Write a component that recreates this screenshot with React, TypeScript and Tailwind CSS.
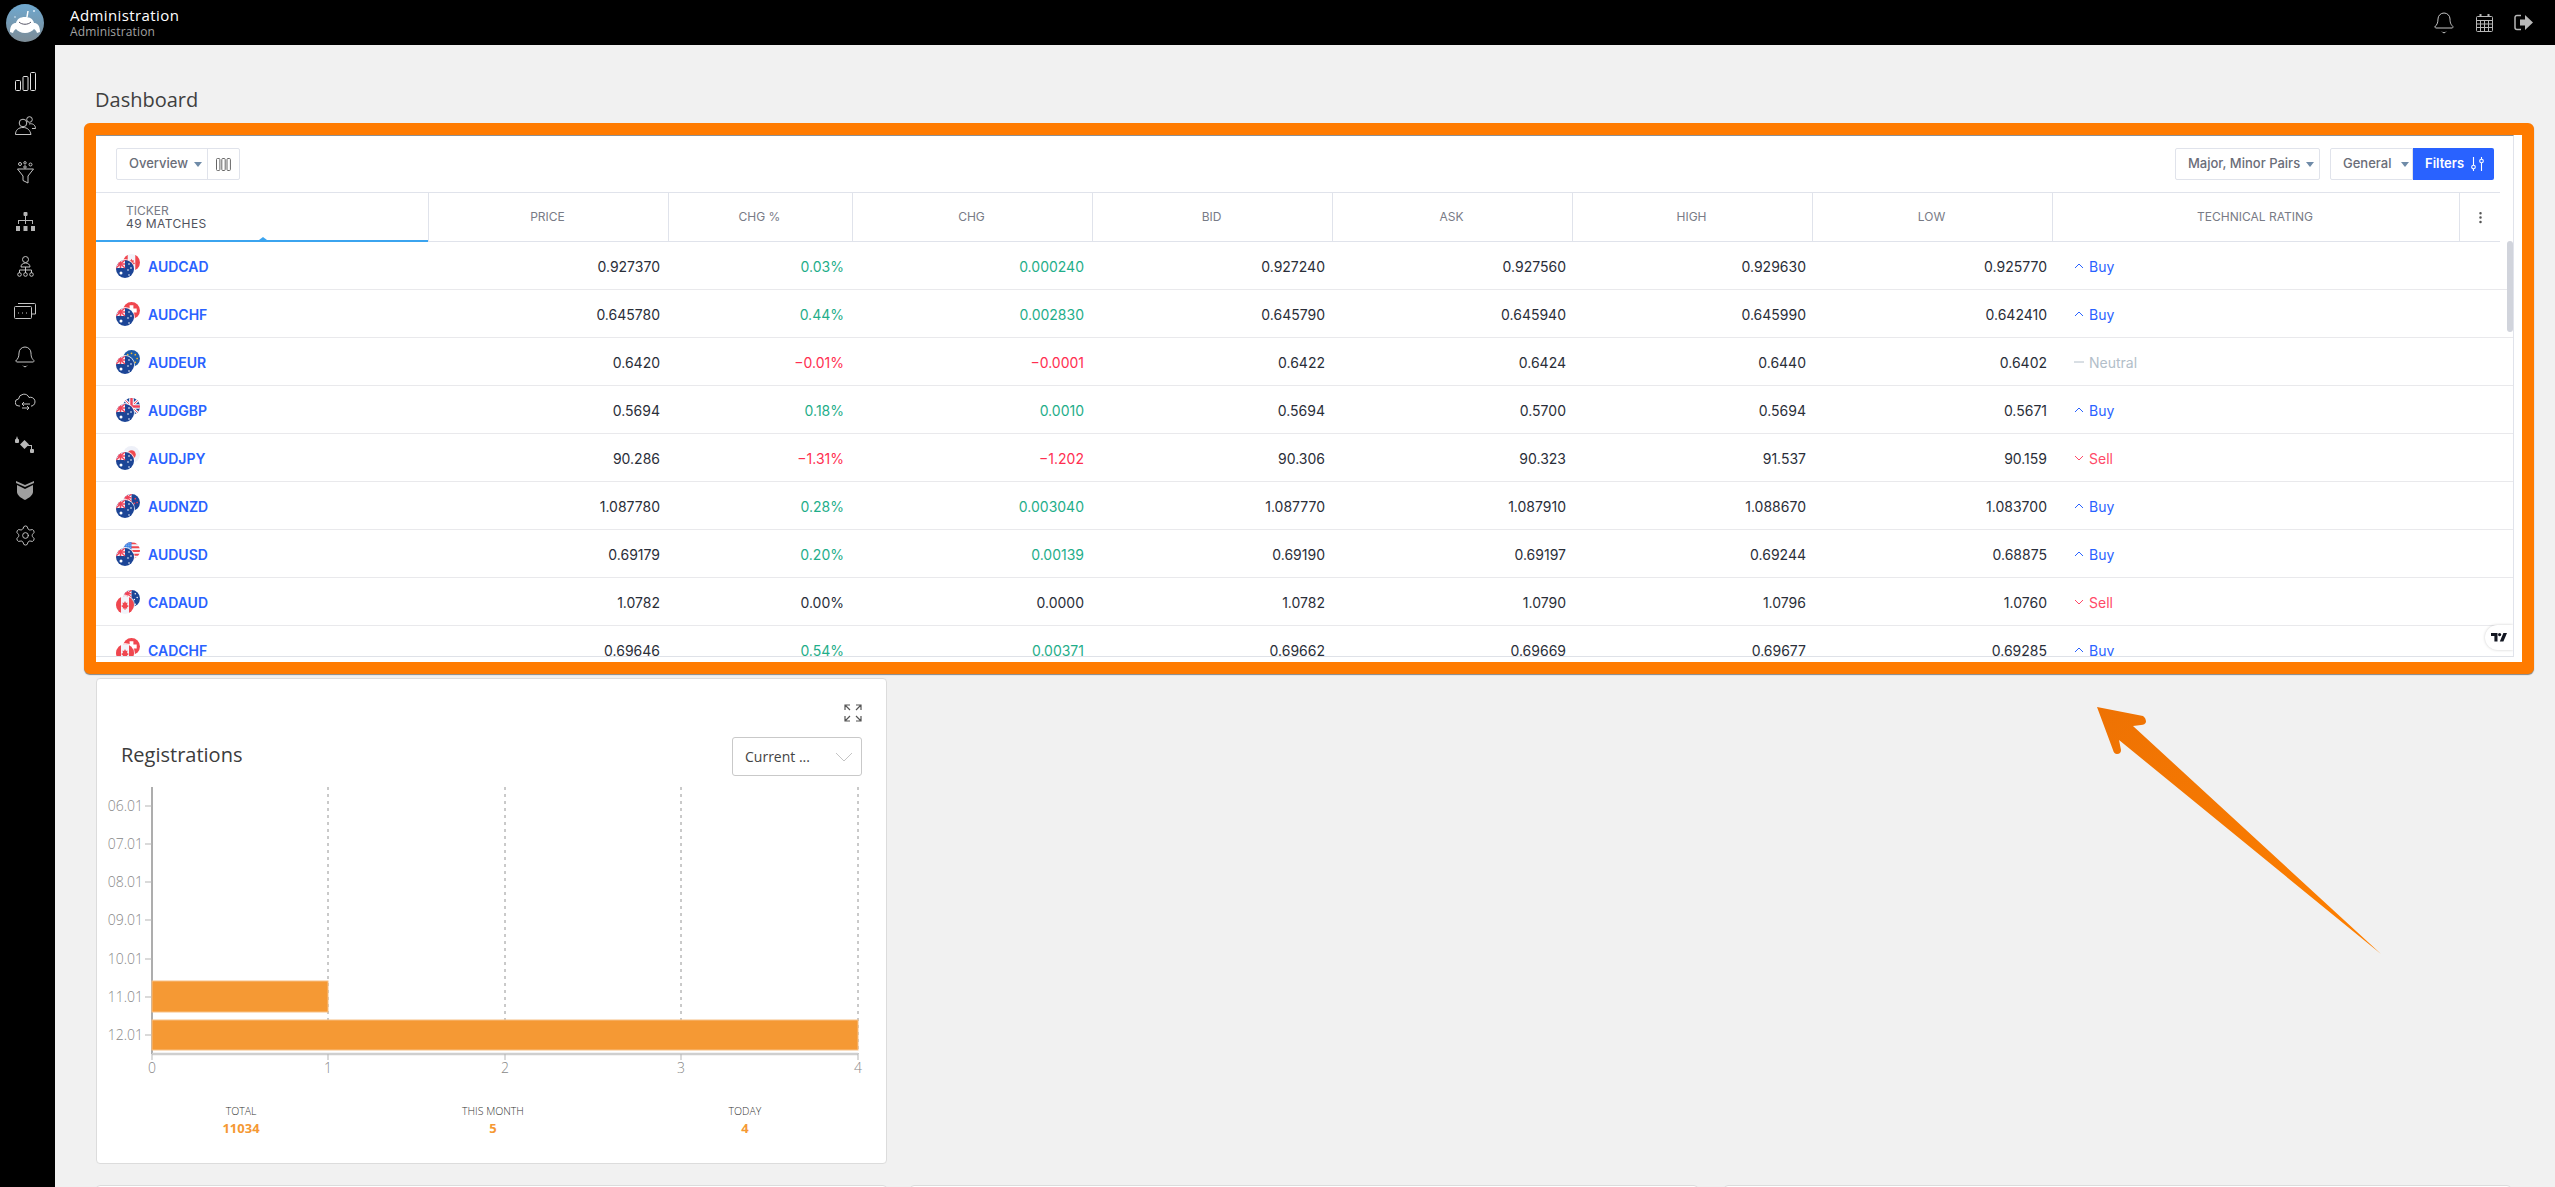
import type { ReactNode } from 'react';
import { Bell, Settings, EllipsisVertical } from 'lucide-react';

const GRID = 'grid grid-cols-[333px_240px_184px_240px_240px_240px_240px_240px_407px_1fr]';

const flags: Record<string, ReactNode> = {
  AU: (
    <>
      <rect width="18" height="18" fill="#1c4596" />
      <rect width="9" height="8" fill="#f3f4fa" />
      <path d="M0 0l9 8M9 0L0 8" stroke="#f0445a" strokeWidth="1.4" />
      <path d="M4.5 0v8M0 4h9" stroke="#f0445a" strokeWidth="1.6" />
      <circle cx="5" cy="13" r="1.5" fill="#fff" />
      <circle cx="13" cy="4" r=".8" fill="#fff" />
      <circle cx="15" cy="8" r=".8" fill="#fff" />
      <circle cx="12" cy="10" r=".8" fill="#fff" />
      <circle cx="13" cy="15" r=".8" fill="#fff" />
    </>
  ),
  CA: (
    <>
      <rect width="18" height="18" fill="#f3f4fa" />
      <rect width="5" height="18" fill="#f0474f" />
      <rect x="13" width="5" height="18" fill="#f0474f" />
      <path d="M9 5l1 2 1.5-.5-.5 3 1-.5.6 1.2-1.6 1.3.2 1H9.4V14h-.8v-1.5H6.8l.2-1-1.6-1.3.6-1.2 1 .5-.5-3 1.5.5z" fill="#f0474f" />
    </>
  ),
  CH: (
    <>
      <rect width="18" height="18" fill="#f0474f" />
      <path d="M7 3.5h4v3.5h3.5v4H11v3.5H7V11H3.5V7H7z" fill="#fff" />
    </>
  ),
  EU: (
    <>
      <rect width="18" height="18" fill="#1f5ca8" />
      <circle cx="9" cy="3.5" r=".9" fill="#f5b82e" />
      <circle cx="5" cy="5" r=".9" fill="#f5b82e" />
      <circle cx="13" cy="5" r=".9" fill="#f5b82e" />
      <circle cx="15" cy="9" r=".9" fill="#f5b82e" />
      <circle cx="3" cy="9" r=".9" fill="#f5b82e" />
      <circle cx="13" cy="13" r=".9" fill="#f5b82e" />
    </>
  ),
  GB: (
    <>
      <rect width="18" height="18" fill="#1c4596" />
      <path d="M0 0l18 18M18 0L0 18" stroke="#f3f4fa" strokeWidth="3" />
      <path d="M0 0l18 18M18 0L0 18" stroke="#f0445a" strokeWidth="1" />
      <path d="M9 0v18M0 9h18" stroke="#f3f4fa" strokeWidth="5" />
      <path d="M9 0v18M0 9h18" stroke="#f0445a" strokeWidth="2.6" />
    </>
  ),
  JP: (
    <>
      <rect width="18" height="18" fill="#eef0f8" />
      <circle cx="9" cy="9" r="4.5" fill="#f0474f" />
    </>
  ),
  NZ: (
    <>
      <rect width="18" height="18" fill="#1c4596" />
      <rect width="9" height="8" fill="#f3f4fa" />
      <path d="M0 0l9 8M9 0L0 8" stroke="#f0445a" strokeWidth="1.4" />
      <path d="M4.5 0v8M0 4h9" stroke="#f0445a" strokeWidth="1.6" />
      <circle cx="13" cy="5" r=".9" fill="#f0445a" />
      <circle cx="15" cy="9" r=".9" fill="#f0445a" />
      <circle cx="12" cy="10" r=".9" fill="#f0445a" />
    </>
  ),
  US: (
    <>
      <rect width="18" height="18" fill="#f3f4fa" />
      <path d="M0 1.5h18M0 5.5h18M0 9.5h18M0 13.5h18M0 17.5h18" stroke="#f0474f" strokeWidth="2" />
      <rect width="9" height="8" fill="#3b82e6" />
      <path d="M1 2h7M1 4h7M1 6h7" stroke="#cfe0fa" strokeWidth=".8" strokeDasharray="1 1" />
    </>
  ),
};

const rows = [
  ['AU', 'CA', 'AUDCAD', '0.927370', '0.03%', '0.000240', '0.927240', '0.927560', '0.929630', '0.925770', 'Buy'],
  ['AU', 'CH', 'AUDCHF', '0.645780', '0.44%', '0.002830', '0.645790', '0.645940', '0.645990', '0.642410', 'Buy'],
  ['AU', 'EU', 'AUDEUR', '0.6420', '−0.01%', '−0.0001', '0.6422', '0.6424', '0.6440', '0.6402', 'Neutral'],
  ['AU', 'GB', 'AUDGBP', '0.5694', '0.18%', '0.0010', '0.5694', '0.5700', '0.5694', '0.5671', 'Buy'],
  ['AU', 'JP', 'AUDJPY', '90.286', '−1.31%', '−1.202', '90.306', '90.323', '91.537', '90.159', 'Sell'],
  ['AU', 'NZ', 'AUDNZD', '1.087780', '0.28%', '0.003040', '1.087770', '1.087910', '1.088670', '1.083700', 'Buy'],
  ['AU', 'US', 'AUDUSD', '0.69179', '0.20%', '0.00139', '0.69190', '0.69197', '0.69244', '0.68875', 'Buy'],
  ['CA', 'AU', 'CADAUD', '1.0782', '0.00%', '0.0000', '1.0782', '1.0790', '1.0796', '1.0760', 'Sell'],
  ['CA', 'CH', 'CADCHF', '0.69646', '0.54%', '0.00371', '0.69662', '0.69669', '0.69677', '0.69285', 'Buy'],
];

function changeColor(v: string) {
  if (v.startsWith('−')) return 'text-[#ff2e50]';
  if (/^0\.0+%?$/.test(v)) return 'text-[#2a2e39]';
  return 'text-[#1fae8a]';
}

function FlagPair({ base, quote }: { base: string; quote: string }) {
  return (
    <span className="relative block w-[25px] h-[25px] mr-[7px]">
      <span className="absolute left-[7px] top-0 w-[17px] h-[17px] rounded-full overflow-hidden">
        <svg viewBox="0 0 18 18" className="w-full h-full">{flags[quote]}</svg>
      </span>
      <span className="absolute left-0 top-[6px] w-[18px] h-[18px] rounded-full overflow-hidden ring-1 ring-white/80">
        <svg viewBox="0 0 18 18" className="w-full h-full">{flags[base]}</svg>
      </span>
    </span>
  );
}

function Rating({ value }: { value: string }) {
  if (value === 'Buy') {
    return (
      <span className="flex items-center gap-[5px] text-[#2962ff]">
        <svg width="10" height="6" viewBox="0 0 10 6" fill="none" stroke="currentColor">
          <path d="M1 5l4-4 4 4" />
        </svg>
        Buy
      </span>
    );
  }
  if (value === 'Sell') {
    return (
      <span className="flex items-center gap-[5px] text-[#ff4a68]">
        <svg width="10" height="6" viewBox="0 0 10 6" fill="none" stroke="currentColor">
          <path d="M1 1l4 4 4-4" />
        </svg>
        Sell
      </span>
    );
  }
  return (
    <span className="flex items-center gap-[5px] text-[#b2bec9]">
      <svg width="10" height="6" viewBox="0 0 10 6" fill="none" stroke="currentColor">
        <path d="M0 3h10" />
      </svg>
      {value}
    </span>
  );
}

function Caret() {
  return (
    <svg width="8" height="5" viewBox="0 0 8 5" className="text-[#6f8ba8]">
      <path d="M0 0h8L4 5z" fill="currentColor" />
    </svg>
  );
}

function MarketTable() {
  const heads = ['PRICE', 'CHG %', 'CHG', 'BID', 'ASK', 'HIGH', 'LOW', 'TECHNICAL RATING'];
  return (
    <div className="relative w-[2418px] h-[522px] overflow-hidden border-t border-[#8f8f8f] border-r-[#e0e3eb] border-r border-b-[#dfe2e8] border-b font-['Inter',sans-serif]">
      {/* toolbar */}
      <div className="flex items-center justify-between h-[56px] pt-[12px] pb-[12px] pl-[20px] pr-[19px] text-[13px] font-medium text-[#6a6d78]">
        <div className="flex h-[32px] border border-[#e0e3eb] rounded-[2px]">
          <div className="flex items-center gap-[6px] pl-[12px] w-[91px] border-r border-[#e0e3eb]">
            Overview
            <Caret />
          </div>
          <div className="flex items-center justify-center w-[31px]">
            <svg width="15" height="13" viewBox="0 0 15 13" fill="none" stroke="#666" strokeWidth="1">
              <rect x=".5" y=".5" width="3.4" height="12" rx="1" />
              <rect x="5.8" y=".5" width="3.4" height="12" rx="1" />
              <rect x="11" y=".5" width="3.4" height="12" rx="1" />
            </svg>
          </div>
        </div>
        <div className="flex gap-[10px]">
          <div className="flex items-center gap-[6px] h-[32px] w-[145px] pl-[12px] border border-[#e0e3eb] rounded-[2px]">
            Major, Minor Pairs
            <Caret />
          </div>
          <div className="flex h-[32px]">
            <div className="flex items-center gap-[10px] w-[83px] pl-[12px] border border-[#e0e3eb] rounded-l-[2px]">
              General
              <Caret />
            </div>
            <div className="flex items-center w-[81px] pl-[12px] gap-[7px] bg-[#2962ff] text-white font-semibold rounded-r-[2px]">
              Filters
              <svg width="13" height="16" viewBox="0 0 13 16" fill="none" stroke="#fff" strokeWidth="1.1">
                <path d="M2.5 1v8M2.5 13v2M10.5 1v2M10.5 7v8" />
                <circle cx="2.5" cy="11" r="1.8" />
                <circle cx="10.5" cy="5" r="1.8" />
              </svg>
            </div>
          </div>
        </div>
      </div>

      {/* header */}
      <div className={`${GRID} h-[50px] border-t border-b border-[#e0e3eb] text-[12px] text-[#787b86] mr-[13px]`}>
        <div className="relative flex flex-col justify-center pl-[30px] leading-[13px] border-r border-[#e0e3eb]">
          <span>TICKER</span>
          <span className="text-[#50535e] tracking-[0.4px]">49 MATCHES</span>
          <span className="absolute left-0 right-0 bottom-[-1px] h-[2px] bg-[#3ba4ef]" />
          <span className="absolute left-[163px] bottom-[1px] w-0 h-0 border-l-[4px] border-r-[4px] border-b-[3px] border-l-transparent border-r-transparent border-b-[#3ba4ef]" />
        </div>
        {heads.map((h) => (
          <div key={h} className="flex items-center justify-center pr-[2px] border-r border-[#e0e3eb]">
            {h}
          </div>
        ))}
        <div className="flex items-center justify-center w-[41px] text-[#555]">
          <EllipsisVertical size={15} strokeWidth={2} />
        </div>
      </div>

      {/* rows */}
      {rows.map((r) => (
        <div key={r[2]} className={`${GRID} h-[48px] pt-px border-b border-[#e9e9ec] items-center text-[14px] text-[#2a2e39]`}>
          <div className="flex items-center pl-[20px]">
            <FlagPair base={r[0]} quote={r[1]} />
            <span className="font-semibold text-[#2962ff]">{r[2]}</span>
          </div>
          <div className="text-right pr-[9px]">{r[3]}</div>
          <div className={`text-right pr-[9px] ${changeColor(r[4])}`}>{r[4]}</div>
          <div className={`text-right pr-[9px] ${changeColor(r[5])}`}>{r[5]}</div>
          <div className="text-right pr-[8px]">{r[6]}</div>
          <div className="text-right pr-[7px]">{r[7]}</div>
          <div className="text-right pr-[7px]">{r[8]}</div>
          <div className="text-right pr-[6px]">{r[9]}</div>
          <div className="pl-[21px]">
            <Rating value={r[10]} />
          </div>
        </div>
      ))}

      {/* scroll thumb */}
      <div className="absolute right-0 top-[105px] w-[6px] h-[91px] rounded-[3px] bg-[#d1d4dc]" />

      {/* tradingview badge */}
      <div className="absolute right-0 bottom-[6px] w-[28px] h-[25px] flex items-center justify-center bg-white rounded-l-full shadow-[0_0_3px_rgba(0,0,0,0.2)]">
        <svg width="16" height="9" viewBox="0 0 16 9" fill="#131722">
          <path d="M0 0h6.5v8.5H3.4V3H0z" />
          <circle cx="8.6" cy="1.6" r="1.6" />
          <path d="M12.4 0H16l-3.6 8.5H8.8z" />
        </svg>
      </div>
    </div>
  );
}

function RegistrationsChart() {
  const days = ['06.01', '07.01', '08.01', '09.01', '10.01', '11.01', '12.01'];
  const dayY = [26, 64, 102, 140, 179, 217, 255];
  const gridX = [55, 231, 408, 584, 761];
  return (
    <svg width="789" height="300" viewBox="0 0 789 300" className="block mt-[4px] font-['Open_Sans',sans-serif]">
      {gridX.slice(1).map((x) => (
        <line key={x} x1={x} y1="7" x2={x} y2="274" stroke="#949494" strokeDasharray="3 4" />
      ))}
      <line x1="55" y1="7" x2="55" y2="274" stroke="#adadad" strokeWidth="2" />
      {days.map((d, i) => (
        <g key={d}>
          <line x1="48" y1={dayY[i]} x2="55" y2={dayY[i]} stroke="#b5b5b5" />
          <text x="46" y={dayY[i] + 5} textAnchor="end" fontSize="14" fontWeight="300" fill="#888">
            {d}
          </text>
        </g>
      ))}
      <rect x="55" y="201" width="176" height="31" fill="#f59934" stroke="#f8c084" />
      <rect x="55" y="240" width="706" height="30" fill="#f59934" stroke="#f8c084" />
      <line x1="55" y1="274" x2="761" y2="274" stroke="#cfcfcf" strokeWidth="2.5" />
      {gridX.map((x, i) => (
        <g key={x}>
          <line x1={x} y1="274" x2={x} y2="280" stroke="#b5b5b5" />
          <text x={x} y="293" textAnchor="middle" fontSize="14" fontWeight="300" fill="#888">
            {i}
          </text>
        </g>
      ))}
    </svg>
  );
}

function RegistrationsCard() {
  const stats = [
    ['TOTAL', '11034'],
    ['THIS MONTH', '5'],
    ['TODAY', '4'],
  ];
  return (
    <div className="w-[791px] h-[486px] bg-white border border-[#dcdcdc] rounded-[4px] pt-[25px] font-['Open_Sans',sans-serif]">
      <div className="flex justify-end pr-[24px]">
        <svg width="18" height="18" viewBox="0 0 18 18" fill="none" stroke="#555" strokeWidth="1.2">
          <path d="M1 6V1h5M1 1l5 5M12 1h5v5M17 1l-5 5M1 12v5h5M1 17l5-5M17 12v5h-5M17 17l-5-5" />
        </svg>
      </div>
      <div className="flex items-center justify-between pl-[24px] pr-[24px] mt-[15px]">
        <span className="text-[20px] text-[#3c3c3c] pb-[4px]">Registrations</span>
        <div className="flex items-center justify-between w-[130px] h-[39px] pl-[12px] pr-[8px] border border-[#c9c9c9] rounded-[3px] text-[14px] text-[#444]">
          Current ...
          <svg width="18" height="10" viewBox="0 0 18 10" fill="none" stroke="#c4c4c4">
            <path d="M1 1l8 8 8-8" />
          </svg>
        </div>
      </div>
      <RegistrationsChart />
      <div className="grid grid-cols-3 w-[756px] ml-[18px] mt-[23px] text-center">
        {stats.map(([label, value]) => (
          <div key={label}>
            <div className="text-[10.5px] leading-[16px] font-light text-[#333]">{label}</div>
            <div className="text-[13px] leading-[18px] font-bold text-[#f59934]">{value}</div>
          </div>
        ))}
      </div>
    </div>
  );
}

const stroke = { fill: 'none', stroke: '#c4c4c4', strokeWidth: 1 };

const sideIcons: [string, ReactNode][] = [
  ['h-[46px]', <svg key="bars" width="21" height="19" viewBox="0 0 21 19" fill="none" stroke="#e4e4e4">
    <rect x=".5" y="8.5" width="5" height="10" rx="1" />
    <rect x="8" y="4.5" width="5" height="14" rx="1" />
    <rect x="15.5" y=".5" width="5" height="18" rx="1" />
  </svg>],
  ['h-[42px]', <svg key="users" width="21" height="19" viewBox="0 0 21 19" {...stroke}>
    <circle cx="8" cy="7" r="3.8" />
    <path d="M.5 18.5c0-4.500 3-7 7.500-7s7 2.500 8 7z" />
    <circle cx="14.500" cy="3.500" r="2.800" />
    <path d="M14 8c3.500-1 6.500 1 6.500 4.500H17" />
  </svg>],
  ['h-[52px]', <svg key="funnel" width="17" height="23" viewBox="0 0 17 23" {...stroke}>
    <circle cx="3" cy="3" r="1.500" />
    <circle cx="8" cy="1.800" r="1.200" />
    <circle cx="8" cy="6" r="1.200" />
    <circle cx="13.500" cy="3.500" r="1.500" />
    <path d="M.5 8h16l-5.500 7v7l-5-2.500V15z" />
  </svg>],
  ['h-[46px]', <svg key="tree" width="19" height="19" viewBox="0 0 19 19" fill="#b4b4b4">
    <rect x="7.500" y="0" width="4" height="4" rx="1" />
    <path d="M9 4h1v4h7v4h-1V9h-6v3H9V9H3v3H2V8h7z" />
    <rect x="0" y="14" width="4" height="5" />
    <rect x="7.500" y="14" width="4" height="5" />
    <rect x="15" y="14" width="4" height="5" />
  </svg>],
  ['h-[44px]', <svg key="org" width="17" height="21" viewBox="0 0 17 21" {...stroke}>
    <circle cx="8.500" cy="3.500" r="3" />
    <path d="M4 11c0-2.500 2-4 4.500-4s4.500 1.500 4.500 4zM8.500 11v6M2.500 17v-3h12v3" />
    <circle cx="2.500" cy="18.500" r="1.800" />
    <circle cx="8.500" cy="18.500" r="1.800" />
    <circle cx="14.500" cy="18.500" r="1.800" />
  </svg>],
  ['h-[46px]', <svg key="cards" width="22" height="16" viewBox="0 0 22 16" {...stroke}>
    <rect x=".5" y="3.500" width="17" height="12" rx="1" />
    <path d="M4 .5h16.500a1 1 0 0 1 1 1V11h-4" />
    <path d="M4 10h1M8 10h1M12 10h1" />
  </svg>],
  ['h-[46px]', <Bell key="bell" size={24} strokeWidth={1} color="#c4c4c4" />],
  ['h-[44px]', <svg key="cloud" width="21" height="19" viewBox="0 0 21 19" {...stroke}>
    <path d="M5 13H4a3.500 3.500 0 0 1-.5-7A5.500 5.500 0 0 1 14 4.500 4.300 4.300 0 0 1 17 13h-1" />
    <path d="M7 11h8M7 11l2-2M7 11l2 2M14 15H7M14 15l-2-2M14 15l-2 2" />
  </svg>],
  ['h-[42px]', <svg key="flow" width="20" height="18" viewBox="0 0 20 18" fill="#b8b8b8">
    <rect x="0" y="3" width="4" height="4" rx="1" />
    <path d="M2 0l1 3H1z" />
    <path d="M9.500 4l4.500 4.500L9.500 13 5 8.500z" />
    <path d="M4 5h3M12 9h5v4h-1v-3h-3z" />
    <rect x="15" y="13" width="4" height="4" rx="1" />
  </svg>],
  ['h-[48px]', <svg key="shield" width="18" height="19" viewBox="0 0 18 19" fill="#a0a0a0">
    <path d="M0 0l9 4 9-4v2L9 6 0 2z" />
    <path d="M1 4l8 4 8-4v7c0 3-4 6-8 8-4-2-8-5-8-8z" />
  </svg>],
  ['h-[42px]', <Settings key="gear" size={23} strokeWidth={1} color="#c4c4c4" />],
];

export default function App() {
  return (
    <div className="relative h-[1187px] w-[2555px] overflow-hidden bg-[#f1f1f1]">
      {/* top bar */}
      <header className="flex items-center justify-between h-[45px] bg-black pl-[6px] pr-[21px]">
        <div className="flex items-center">
          <svg width="38" height="38" viewBox="0 0 38 38">
            <defs>
              <linearGradient id="logoBg" x1="0" y1="0" x2="0" y2="1">
                <stop offset="0" stopColor="#6ea8cf" />
                <stop offset="1" stopColor="#7d8c96" />
              </linearGradient>
            </defs>
            <circle cx="19" cy="19" r="19" fill="url(#logoBg)" />
            <g transform="translate(0 -2)">
              <path d="M4 30c0-7 3-9 6-9 1-4 4-6 9-6s8 2 9 6c3 0 6 2 6 9l-3 1c-.5-2-1.500-3-3-4-1.500 2-5 4-9 4s-7.500-2-9-4c-1.500 1-2.500 2-3 4z" fill="#fff" />
              <path d="M22 9l-1 6" stroke="#fff" strokeWidth="1.500" />
              <path d="M13 20c3 3 9 3 12 0" stroke="#556" strokeWidth="1" fill="none" />
            </g>
            <circle cx="28" cy="7" r="1" fill="#dfeefa" />
            <circle cx="9" cy="13" r=".8" fill="#dfeefa" />
          </svg>
          <div className="ml-[26px] font-['Open_Sans',sans-serif]">
            <div className="text-[15px] leading-[17px] text-white tracking-[0.4px]">Administration</div>
            <div className="text-[12px] leading-[15px] text-[#a3a3a3] tracking-[0.15px]">Administration</div>
          </div>
        </div>
        <div className="flex items-center gap-[20px] text-[#c4c4c4]">
          <Bell size={24} strokeWidth={1} />
          <svg width="18" height="18" viewBox="0 0 18 18" fill="none" stroke="#b8b8b8">
            <rect x=".5" y="2.500" width="16" height="15" rx="1" />
            <path d="M.5 6.500h16M.5 10h16M.5 13.500h16M4.500 6.500v11M8.500 6.500v11M12.500 6.500v11" />
            <path d="M4.500 0v3M12.500 0v3" strokeWidth="2" />
          </svg>
          <svg width="20" height="17" viewBox="0 0 20 17">
            <path d="M7 1.500H3a2 2 0 0 0-2 2v10a2 2 0 0 0 2 2h4" fill="none" stroke="#b8b8b8" strokeWidth="1.500" />
            <path d="M6 5.500h5V1l8 7.500-8 7.500v-4.500H6z" fill="#b8b8b8" />
          </svg>
        </div>
      </header>

      <div className="flex h-[1142px]">
        {/* sidebar */}
        <nav className="flex flex-col items-center w-[55px] shrink-0 bg-black pt-[13px] pr-[5px]">
          {sideIcons.map(([slot, icon], i) => (
            <div key={i} className={`flex items-center justify-center ${slot}`}>
              {icon}
            </div>
          ))}
        </nav>

        {/* main */}
        <main className="flex-1 pl-[29px]">
          <h1 className="pl-[11px] pt-[41px] h-[78px] text-[20px] leading-[28px] text-[#3f3f3f] font-['Open_Sans',sans-serif]">
            Dashboard
          </h1>
          <div className="w-[2450px] h-[551px] border-[12px] border-[#ff7b00] rounded-[6px] bg-white shadow-[0_1px_1px_rgba(0,0,0,0.45)]">
            <MarketTable />
          </div>
          <div className="pl-[12px] pt-[4px]">
            <RegistrationsCard />
          </div>
          <div className="flex pl-[12px] pt-[21px]">
            <div className="w-[791px] h-[40px] bg-white border border-[#dcdcdc] rounded-[4px]" />
            <div className="w-[788px] h-[40px] ml-[23px] bg-white border border-[#dcdcdc] rounded-[4px]" />
            <div className="w-[787px] h-[40px] ml-[26px] bg-white border border-[#dcdcdc] rounded-[4px]" />
          </div>
        </main>
      </div>

      {/* annotation arrow */}
      <svg className="absolute left-[2090px] top-[700px]" width="300" height="260" viewBox="0 0 300 260">
        <defs>
          <linearGradient id="arrowFill" x1="0" y1="0" x2="1" y2="1">
            <stop offset="0" stopColor="#ee7203" />
            <stop offset="1" stopColor="#ff8000" />
          </linearGradient>
        </defs>
        <path
          d="M7 7L53 16Q56 18 56 22Q55 25 51 25L43 26L291 254L29 40L31 50Q31 54 27 54Q24 54 23 50z"
          fill="url(#arrowFill)"
        />
      </svg>
    </div>
  );
}
